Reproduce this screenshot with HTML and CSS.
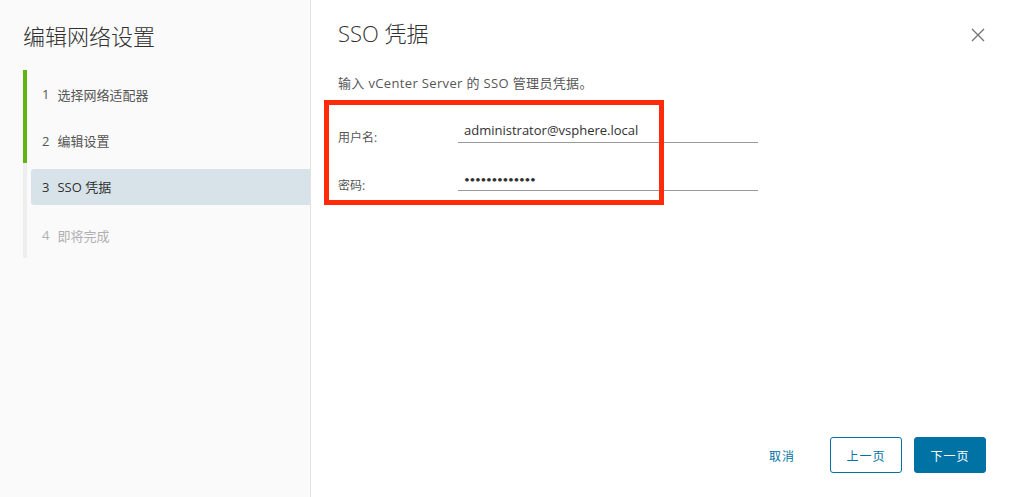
FILE: index.html
```html
<!DOCTYPE html>
<html lang="zh-CN">
<head>
<meta charset="utf-8">
<title>编辑网络设置</title>
<link rel="stylesheet" href="styles.css">
</head>
<body>
<div class="wizard">
  <aside class="sidebar">
    <h2 class="wizard-title">编辑网络设置</h2>
    <ol class="steps">
      <li class="step done"><span class="step-row"><span class="num">1</span>选择网络适配器</span></li>
      <li class="step done"><span class="step-row"><span class="num">2</span>编辑设置</span></li>
      <li class="step current"><span class="step-row"><span class="num">3</span>SSO 凭据</span></li>
      <li class="step disabled"><span class="step-row"><span class="num">4</span>即将完成</span></li>
    </ol>
  </aside>
  <main class="content">
    <header class="content-header">
      <h3 class="page-title">SSO 凭据</h3>
      <button class="close" aria-label="关闭">
        <svg width="14" height="14" viewBox="0 0 14 14"><path d="M1 1 L13 13 M13 1 L1 13" stroke="#737373" stroke-width="1.3" fill="none"/></svg>
      </button>
    </header>
    <p class="desc">输入 vCenter Server 的 SSO 管理员凭据。</p>
    <form class="form">
      <div class="form-row">
        <label class="label">用户名:</label>
        <div class="input">administrator@vsphere.local</div>
      </div>
      <div class="form-row">
        <label class="label">密码:</label>
        <div class="input pw">•••••••••••••</div>
      </div>
    </form>
    <div class="highlight-box"></div>
    <footer class="footer">
      <button class="btn btn-link">取消</button>
      <button class="btn btn-outline">上一页</button>
      <button class="btn btn-primary">下一页</button>
    </footer>
  </main>
</div>
</body>
</html>
```
FILE: styles.css
```css
* { box-sizing: border-box; }
html, body {
  margin: 0;
  padding: 0;
  height: 100%;
  background: #fff;
  font-family: "Open Sans", "Noto Sans CJK SC", sans-serif;
  color: #565656;
}
.wizard {
  display: flex;
  height: 497px;
}
.sidebar {
  width: 311px;
  flex: none;
  background: #fafafa;
  border-right: 1px solid #e3e3e3;
  padding-left: 23px;
}
.wizard-title {
  margin: 19px 0 0;
  font-size: 22px;
  font-weight: 300;
  line-height: 32px;
  color: #313131;
  font-family: "Noto Sans CJK SC", sans-serif;
}
.steps {
  list-style: none;
  margin: 19px 0 0;
  padding: 0;
}
.step {
  border-left: 4px solid #eeeeee;
  padding-left: 4px;
  height: 47px;
  display: flex;
  align-items: center;
}
.step.done { border-left-color: #60b515; height: 46.5px; }
.step:last-child { height: 48px; }
.step-row {
  flex: 1;
  height: 36px;
  display: flex;
  align-items: center;
  padding-left: 11px;
  font-size: 13px;
  color: #565656;
  border-radius: 3px 0 0 3px;
  padding-top: 2px;
}
.num { margin-right: 8px; }
.step.current .step-row {
  background: #d8e3e9;
  color: #313131;
  padding-top: 0;
}
.step.disabled .step-row { color: #b0b0b0; }

.content {
  flex: 1;
  position: relative;
  padding: 0 23px 0 27px;
  display: flex;
  flex-direction: column;
}
.content-header {
  display: flex;
  justify-content: space-between;
  align-items: center;
  margin-top: 17px;
  height: 32px;
}
.page-title {
  margin: 0;
  font-size: 22px;
  font-weight: 300;
  color: #313131;
  line-height: 32px;
}
.close {
  border: 0;
  background: none;
  padding: 0;
  margin-right: 1px;
  margin-top: 4px;
  width: 14px;
  height: 14px;
  display: flex;
}
.desc {
  margin: 25px 0 0;
  font-size: 13px;
  line-height: 18px;
  letter-spacing: 0.35px;
  color: #565656;
}
.form {
  margin-top: 3px;
}
.form-row {
  display: flex;
  align-items: flex-end;
  height: 48px;
}
.label {
  width: 120px;
  font-size: 12px;
  line-height: 18px;
  color: #565656;
  margin-bottom: -4px;
}
.input {
  width: 300px;
  height: 25px;
  border-bottom: 1px solid #9a9a9a;
  padding-left: 6px;
  font-size: 13px;
  line-height: 24px;
  color: #313131;
}
.input.pw {
  font-family: "Lato", sans-serif;
  font-size: 10px;
  letter-spacing: -0.3px;
  line-height: 26px;
}
.highlight-box {
  position: absolute;
  left: 13px;
  top: 100px;
  width: 340px;
  height: 105px;
  border: 5px solid #fe2b0a;
  pointer-events: none;
}
.footer {
  margin-top: auto;
  margin-bottom: 24px;
  display: flex;
  justify-content: flex-end;
  gap: 12px;
}
.btn {
  min-width: 72px;
  height: 36px;
  border-radius: 3px;
  font-family: "Noto Sans CJK SC", sans-serif;
  font-size: 12px;
  letter-spacing: 1px;
  padding: 0 12px;
  cursor: pointer;
}
.btn-link {
  border: 0;
  background: none;
  color: #0072a3;
}
.btn-outline {
  border: 1px solid #0072a3;
  background: #fff;
  color: #0072a3;
}
.btn-primary {
  border: 1px solid #0072a3;
  background: #0072a3;
  color: #fff;
}
```
